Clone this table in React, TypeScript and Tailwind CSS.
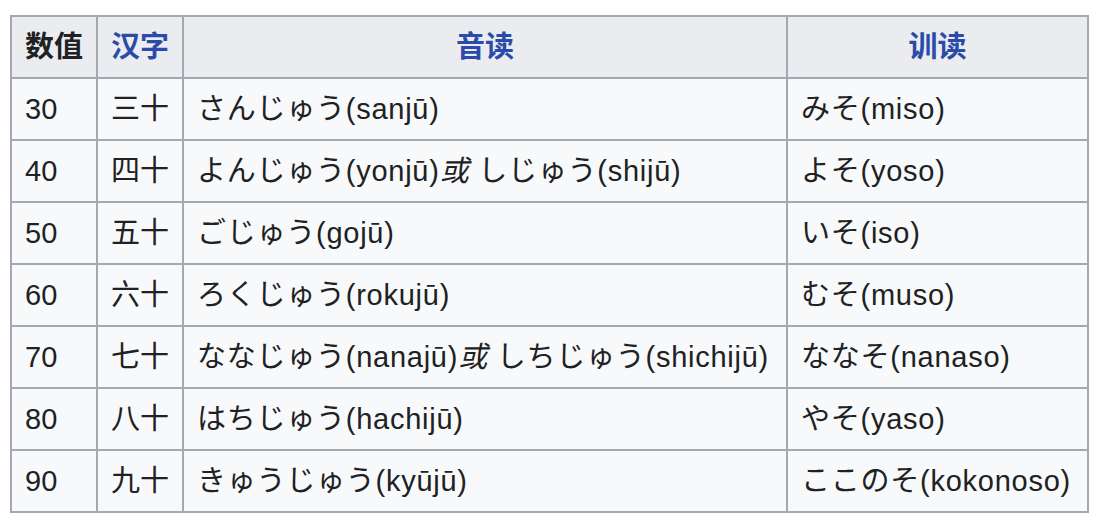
import React from "react";

const rows: { num: string; kanji: string; on: React.ReactNode; kun: string }[] = [
  { num: "30", kanji: "三十", on: "さんじゅう(sanjū)", kun: "みそ(miso)" },
  {
    num: "40",
    kanji: "四十",
    on: (
      <>
        よんじゅう(yonjū)<i>或</i> しじゅう(shijū)
      </>
    ),
    kun: "よそ(yoso)",
  },
  { num: "50", kanji: "五十", on: "ごじゅう(gojū)", kun: "いそ(iso)" },
  { num: "60", kanji: "六十", on: "ろくじゅう(rokujū)", kun: "むそ(muso)" },
  {
    num: "70",
    kanji: "七十",
    on: (
      <>
        ななじゅう(nanajū)<i>或</i> しちじゅう(shichijū)
      </>
    ),
    kun: "ななそ(nanaso)",
  },
  { num: "80", kanji: "八十", on: "はちじゅう(hachijū)", kun: "やそ(yaso)" },
  { num: "90", kanji: "九十", on: "きゅうじゅう(kyūjū)", kun: "ここのそ(kokonoso)" },
];

const cell = "border-2 border-[#a2a9b1] px-[13px] align-middle";

export default function App() {
  return (
    <div
      className="w-[1100px] h-[528px] bg-white pt-[15px] pl-[10px]"
      style={{ fontFamily: '"Liberation Sans", "Noto Sans CJK SC", sans-serif' }}
    >
      <table className="border-collapse bg-[#f8f9fa] text-[29px] leading-none text-[#202122] table-fixed w-[1077px]">
        <colgroup>
          <col className="w-[86px]" />
          <col className="w-[86px]" />
          <col className="w-[604px]" />
          <col className="w-[301px]" />
        </colgroup>
        <thead>
          <tr className="h-[62px] bg-[#eaecf0] font-bold">
            <th className={`${cell} text-center text-[#202122]`}>数值</th>
            <th className={`${cell} text-center text-[#2a4ba8]`}>汉字</th>
            <th className={`${cell} text-center text-[#2a4ba8]`}>音读</th>
            <th className={`${cell} text-center text-[#2a4ba8]`}>训读</th>
          </tr>
        </thead>
        <tbody>
          {rows.map((r) => (
            <tr key={r.num} className="h-[62px]">
              <td className={cell}>{r.num}</td>
              <td className={cell}>{r.kanji}</td>
              <td className={`${cell} whitespace-nowrap tracking-[0.75px]`}>{r.on}</td>
              <td className={`${cell} whitespace-nowrap tracking-[0.75px]`}>{r.kun}</td>
            </tr>
          ))}
        </tbody>
      </table>
    </div>
  );
}
